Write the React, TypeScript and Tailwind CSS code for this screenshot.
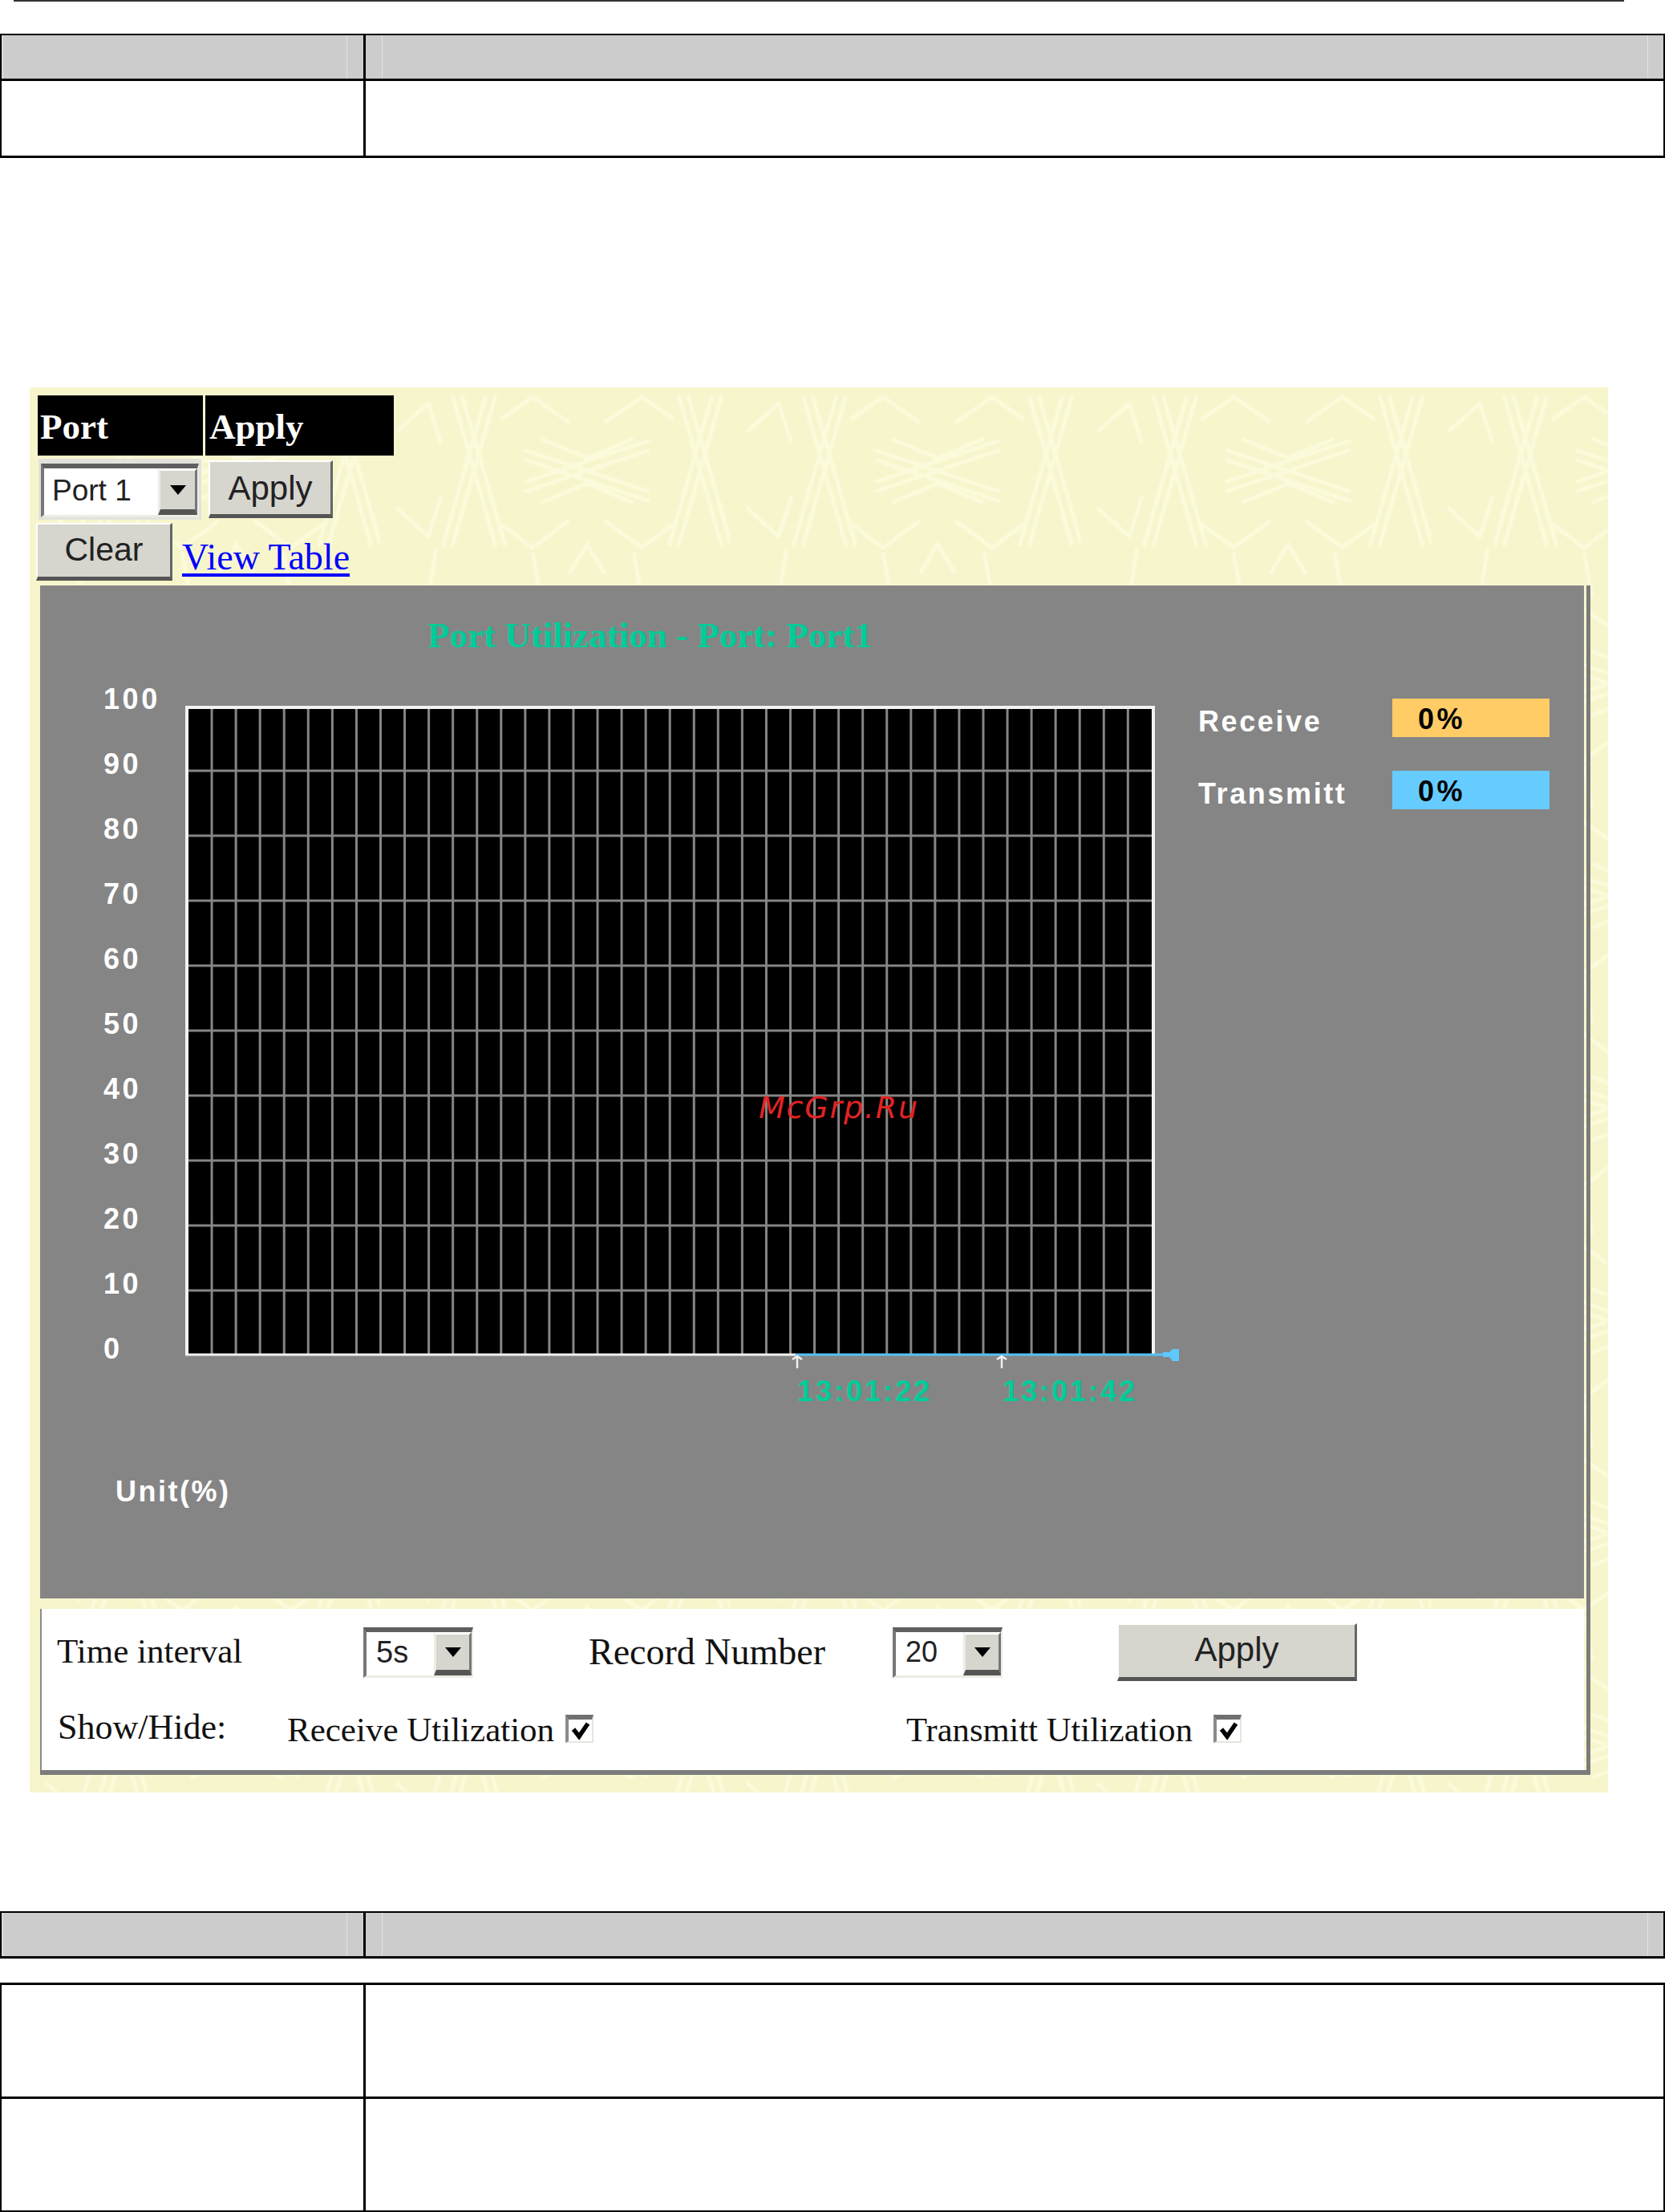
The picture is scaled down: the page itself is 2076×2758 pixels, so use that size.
const serif = "font-['Liberation_Serif',serif]"
const sans = "font-['Liberation_Sans',Arial,sans-serif]"

const yLabels = ['100', '90', '80', '70', '60', '50', '40', '30', '20', '10', '0']
const gridX = Array.from({ length: 39 }, (_, i) => 2 + 30.06 * (i + 1))
const gridY = Array.from({ length: 9 }, (_, i) => 81 * (i + 1))

function HeaderRow({ height }: { height: number }) {
  return (
    <div className="border-x-2 border-t-2 border-b-[3px] border-black bg-[#cccccc]" style={{ height }}>
      <div className="grid h-full grid-cols-[454px_1fr]">
        <div className="flex justify-between border-r-[3px] border-black pl-[1px] pr-[20px]">
          <span className="w-[1px] bg-[#e2e2e2]" />
          <span className="w-[1px] bg-[#e2e2e2]" />
        </div>
        <div className="flex justify-between pl-[20px] pr-[19px]">
          <span className="w-[1px] bg-[#e2e2e2]" />
          <span className="w-[1px] bg-[#e2e2e2]" />
        </div>
      </div>
    </div>
  )
}

function BodyRow({ height }: { height: number }) {
  return (
    <div className="grid grid-cols-[454px_1fr] border-b-[3px] border-black" style={{ height }}>
      <div className="border-r-[3px] border-black" />
      <div />
    </div>
  )
}

function Arrow() {
  return (
    <svg width="20" height="12" viewBox="0 0 20 12">
      <polygon points="0,0 20,0 10,12" fill="#000" />
    </svg>
  )
}

function Select({
  value,
  width,
  btn,
  pad,
  size,
}: {
  value: string
  width: string
  btn: string
  pad: string
  size: string
}) {
  return (
    <div
      className={`flex h-full ${width} border-t-[6px] border-l-[4px] border-r-[2px] border-b-[3px] border-t-[#5f5f5f] border-l-[#777777] border-r-[#ecece6] border-b-[#ecece6] bg-white`}
    >
      <span className={`flex flex-1 items-center pb-[3px] ${pad} ${size} ${sans} leading-none text-[#222222]`}>{value}</span>
      <span
        className={`flex ${btn} items-center justify-center border-t-[3px] border-l-[3px] border-r-[3px] border-b-[7px] border-t-white border-l-[#ecebe5] border-r-[#777777] border-b-[#555555] bg-[#d6d5ce]`}
      >
        <Arrow />
      </span>
    </div>
  )
}

function Button({ label, className }: { label: string; className: string }) {
  return (
    <button
      className={`flex items-center justify-center border-t-[2px] border-l-[2px] border-r-[3px] border-b-[5px] border-t-white border-l-white border-r-[#666666] border-b-[#555555] bg-[#d6d5ce] ${sans} leading-none text-[#222222] ${className}`}
    >
      {label}
    </button>
  )
}

function Checkbox() {
  return (
    <span className="flex h-[35px] w-[35px] items-center justify-center border-t-[6px] border-l-[4px] border-r-[2px] border-b-[2px] border-t-[#707070] border-l-[#8a8a8a] border-r-[#e6e6e0] border-b-[#e6e6e0] bg-white">
      <svg width="24" height="24" viewBox="0 0 24 24">
        <polyline points="3,10 10,19 21,3" fill="none" stroke="#000" strokeWidth="5.5" />
      </svg>
    </span>
  )
}

function PanelTexture() {
  return (
    <svg className="absolute inset-0 h-full w-full blur-[1px]" aria-hidden="true">
      <defs>
        <pattern id="tile" width="437" height="265" patternUnits="userSpaceOnUse">
          <g fill="none" stroke="#fbfbdc" strokeWidth="5">
            {/* wide cross */}
            <path d="M180 78 L336 130 M180 130 L336 78" />
            <path d="M180 90 L336 142 M180 118 L336 66" />
            <path d="M200 64 L258 88 L316 64 M200 144 L258 120 L316 144" />
            {/* tall crosses */}
            <path d="M90 10 L144 198 M144 10 L90 198" />
            <path d="M102 10 L156 198 M132 10 L78 198" />
            <path d="M372 10 L426 198 M426 10 L372 198" />
            <path d="M384 10 L438 198 M414 10 L360 198" />
            {/* chevrons */}
            <path d="M150 40 L190 12 L236 44 M280 44 L326 12 L366 40" />
            <path d="M150 170 L190 200 L236 166 M280 166 L326 200 L366 170" />
            <path d="M20 56 L60 20 L76 70 M20 150 L60 186 L76 136" />
            <path d="M200 262 L190 206 M326 262 L316 206 M60 262 L70 200" />
            <path d="M236 232 L258 196 L280 232" />
          </g>
        </pattern>
      </defs>
      <rect width="100%" height="100%" fill="url(#tile)" />
    </svg>
  )
}

function Plot() {
  return (
    <svg width="1241" height="830" viewBox="-1 0 1241 830" className="block">
      <rect x="-1" y="0" width="1209" height="810" fill="#000" />
      {gridX.map((x) => (
        <line key={x} x1={x} y1="2" x2={x} y2="808" stroke="#858585" strokeWidth="3" />
      ))}
      {gridY.map((y) => (
        <line key={y} x1="2" y1={y} x2="1206" y2={y} stroke="#858585" strokeWidth="3" />
      ))}
      <path d="M1 809 V2 H1206 V809" fill="none" stroke="#f2f2f2" strokeWidth="4" />
      <line x1="-1" y1="809" x2="760" y2="809" stroke="#f2f2f2" strokeWidth="3" />
      <line x1="760" y1="809" x2="1222" y2="809" stroke="#58c2f4" strokeWidth="3" />
      <polygon points="1218,806 1226,806 1230,802 1238,802 1238,817 1230,817 1226,812 1218,812" fill="#5fc8ff" />
      <g fill="none" stroke="#f2f2f2" strokeWidth="2.4">
        <path d="M762 812 V826 M756 815 L762 811 L768 815" />
        <path d="M1017 812 V826 M1011 815 L1017 811 L1023 815" />
      </g>
    </svg>
  )
}

function LegendRow({ label, color }: { label: string; color: string }) {
  return (
    <div className="flex h-[48px] items-start">
      <span className={`w-[242px] pt-[8px] text-[36px] font-bold leading-[41px] tracking-[2.6px] text-white ${sans}`}>
        {label}
      </span>
      <span
        className={`flex h-[48px] w-[196px] items-start pl-[32px] pt-[5px] text-[36px] font-bold leading-[41px] tracking-[3.5px] text-black ${sans} ${color}`}
      >
        0%
      </span>
    </div>
  )
}

export default function App() {
  return (
    <div className="relative h-[2758px] w-[2076px] overflow-hidden bg-white">
      <div className="ml-[17px] h-[2px] w-[2008px] bg-[#333333]" />

      <div className="mt-[40px]">
        <HeaderRow height={59} />
        <div className="border-x-2 border-black">
          <BodyRow height={96} />
        </div>
      </div>

      <div className="relative ml-[37px] mt-[286px] h-[1752px] w-[1968px] bg-[#f7f5cc]">
        <PanelTexture />
        <div className="relative flex flex-col pt-[10px]">
          <div className={`ml-[10px] flex h-[75px] gap-[3px] text-[45px] font-bold leading-[78px] text-white ${serif}`}>
            <div className="w-[206px] bg-black pl-[3px]">Port</div>
            <div className="w-[235px] bg-black pl-[5px]">Apply</div>
          </div>

          <div className="mt-[4px] ml-[11px] flex h-[76px] items-start">
            <div className="h-[76px] w-[203px] bg-[#e2e2dc] px-[3px] pb-[3px] pt-[6px]">
              <Select value="Port 1" width="w-[197px]" btn="w-[49px]" pad="pl-[10px]" size="text-[37px]" />
            </div>
            <Button label="Apply" className="ml-[9px] mt-[2px] h-[72px] w-[155px] text-[42px]" />
          </div>

          <div className="mt-[4px] ml-[8px] flex h-[72px] items-end">
            <Button label="Clear" className="h-[72px] w-[170px] pb-[3px] text-[41px]" />
            <a className={`ml-[12px] mb-[4px] text-[46px] leading-[50px] text-[#0000ff] underline underline-offset-[5px] ${serif}`}>
              View Table
            </a>
          </div>

          <div className="ml-[13px] mt-[6px] w-[1933px] border-b-[6px] border-r-[5px] border-[#7c7c7c]">
            <div className="mr-[3px] h-[1263px] bg-[#858585]">
              <div className={`pl-[483px] pt-[37px] text-[45px] font-bold leading-[50px] text-[#00cc99] ${serif}`}>
                Port Utilization - Port: Port1
              </div>

              <div className={`mt-[12px] flex items-start ${sans}`}>
                <div className="w-[181px] pl-[79px] pt-[2px] text-[36px] font-bold tracking-[3.6px] text-white">
                  {yLabels.map((label) => (
                    <div key={label} className="flex h-[81px] items-center">
                      {label}
                    </div>
                  ))}
                </div>

                <div className="relative mt-[51px] w-[1241px]">
                  <Plot />
                  <div className="mt-[5px] flex h-[40px] items-center pl-[763px] text-[36px] font-bold tracking-[3px] text-[#00cc99]">
                    <span className="w-[256px]">13:01:22</span>
                    <span>13:01:42</span>
                  </div>
                  <span className="absolute left-[715px] top-[482px] font-['DejaVu_Sans',sans-serif] text-[38px] italic leading-none tracking-[1.8px] text-[#e02424]">
                    McGrp.Ru
                  </span>
                </div>

                <div className="ml-[22px] mt-[42px] flex flex-col gap-[42px]">
                  <LegendRow label="Receive" color="bg-[#ffcc66]" />
                  <LegendRow label="Transmitt" color="bg-[#66ccff]" />
                </div>
              </div>

              <div className={`ml-[94px] mt-[83px] text-[36px] font-bold leading-[44px] tracking-[2.5px] text-white ${sans}`}>
                Unit(%)
              </div>
            </div>

            <div className="h-[13px]" />

            <div className={`mr-[3px] h-[201px] border-l-[2px] border-[#8a8a8a] bg-white pt-[18px] text-[#111111] ${serif}`}>
              <div className="flex h-[72px] items-center">
                <span className="w-[401px] pb-[1px] pl-[19px] text-[43px]">Time interval</span>
                <div className="h-[63px]">
                  <Select value="5s" width="w-[137px]" btn="w-[47px]" pad="pl-[12px]" size="text-[38px]" />
                </div>
                <span className="ml-[144px] w-[379px] pb-[1px] text-[46px]">Record Number</span>
                <div className="h-[63px]">
                  <Select value="20" width="w-[137px]" btn="w-[47px]" pad="pl-[12px]" size="text-[36px]" />
                </div>
                <Button label="Apply" className="ml-[143px] h-[72px] w-[299px] pb-[3px] text-[42px]" />
              </div>
              <div className="mt-[42px] flex h-[35px] items-center">
                <span className="w-[306px] pb-[3px] pl-[20px] text-[44px]">Show/Hide:</span>
                <span className="w-[347px] pt-[3px] text-[43px]">Receive Utilization</span>
                <Checkbox />
                <span className="ml-[390px] w-[383px] pt-[3px] text-[42.6px]">Transmitt Utilization</span>
                <Checkbox />
              </div>
            </div>
          </div>
        </div>
      </div>

      <div className="mt-[148px]">
        <HeaderRow height={59} />
      </div>

      <div className="mt-[30px] border-x-2 border-t-[3px] border-black">
        <BodyRow height={142} />
        <BodyRow height={142} />
      </div>
    </div>
  )
}
